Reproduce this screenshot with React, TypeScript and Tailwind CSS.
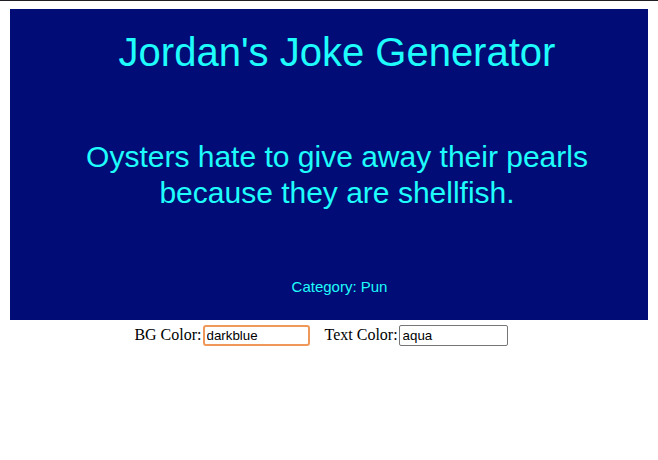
import { useState } from 'react';

const sans = { fontFamily: '"Liberation Sans", Arial, sans-serif' };

export default function App() {
  const [bg, setBg] = useState('darkblue');
  const [fg, setFg] = useState('aqua');

  return (
    <div className="w-[658px] h-[460px] bg-white overflow-hidden">
      {/* window edge */}
      <div className="h-px bg-[#1f2023]" />

      {/* joke card */}
      <div
        className="mx-[10px] mt-[8px] h-[311px] bg-[#010c76] text-[#1ffcfc] flex flex-col items-center pl-[16px] pt-[20px]"
        style={sans}
      >
        <h1 className="text-[40px] leading-[46px] font-normal">Jordan's Joke Generator</h1>
        <p className="mt-[64px] text-[30px] leading-[36px] text-center max-w-[540px]">
          Oysters hate to give away their pearls because they are shellfish.
        </p>
        <p className="mt-[67px] pl-[5px] text-[15px] leading-[17px]">Category: Pun</p>
      </div>

      {/* color controls */}
      <div
        className="mt-[3px] flex justify-center items-center pr-[16px] text-[16px] text-black"
        style={{ fontFamily: '"Liberation Serif", "Times New Roman", serif' }}
      >
        <label className="flex items-center">
          BG Color:
          <input
            value={bg}
            onChange={(e) => setBg(e.target.value)}
            className="ml-[1px] w-[107px] h-[21px] px-[2px] border-2 border-[#f0985a] rounded-[3px] text-[13.33px] outline-none"
            style={sans}
          />
        </label>
        <label className="flex items-center ml-[15px]">
          Text Color:
          <input
            value={fg}
            onChange={(e) => setFg(e.target.value)}
            className="ml-[1px] w-[109px] h-[21px] px-[3px] border border-[#767676] rounded-[2px] text-[13.33px] outline-none"
            style={sans}
          />
        </label>
      </div>
    </div>
  );
}
